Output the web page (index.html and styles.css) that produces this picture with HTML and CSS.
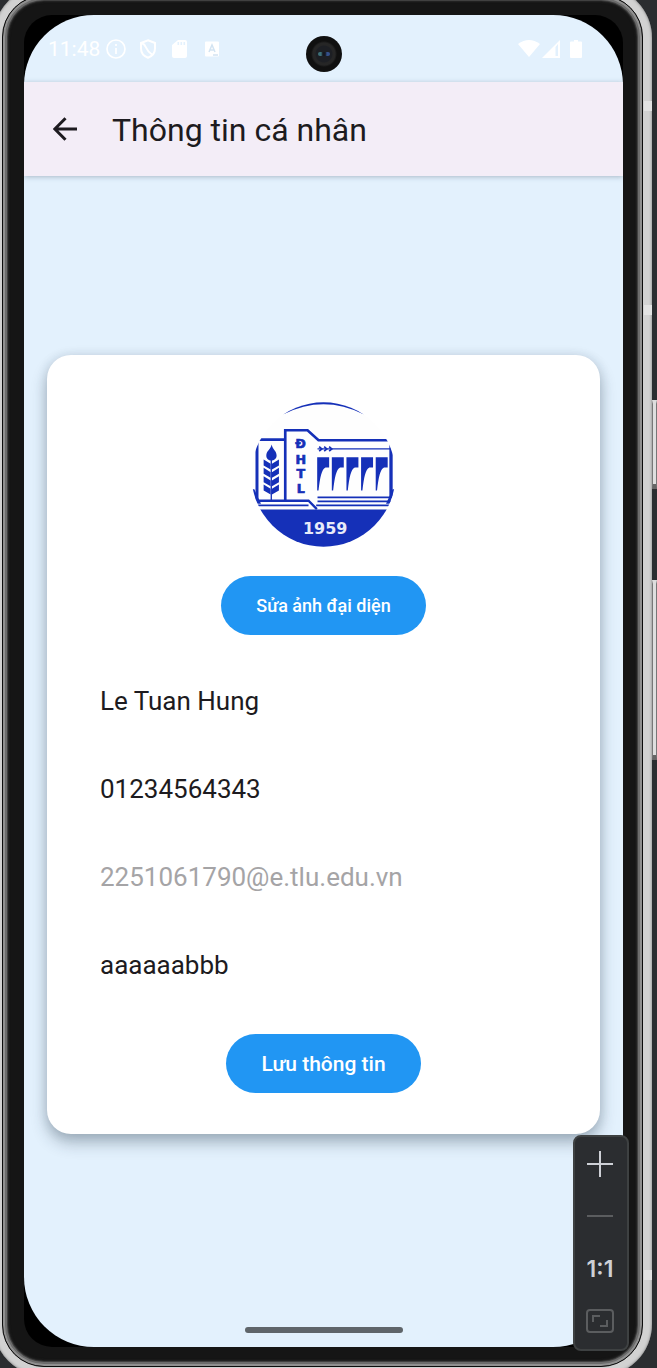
FILE: index.html
```html
<!DOCTYPE html>
<html lang="vi">
<head>
<meta charset="utf-8">
<meta name="viewport" content="width=device-width, initial-scale=1">
<title>Thông tin cá nhân</title>
<link rel="stylesheet" href="styles.css">
</head>
<body>
<div class="phone">
  <div class="frame">
    <div class="glass">
      <div class="screen">
        <div class="status-bar">
          <div class="status-group">
            <span class="clock">11:48</span>
            <svg class="status-icon" viewBox="0 0 20 20" fill="none" stroke="#fff" stroke-width="1.7"><circle cx="10" cy="10" r="9"/><path d="M10 9v6M10 5v2"/></svg>
            <svg class="status-icon" viewBox="0 0 20 20" fill="none" stroke="#fff" stroke-width="2"><path d="M10 1.300 17 4v5.500c0 4.300-3 7.700-7 9.200-4-1.500-7-4.900-7-9.200V4zM4 4c2 1 3 2 4 4.500S12 14 14 15.500"/></svg>
            <svg class="status-icon" viewBox="0 0 20 20" fill="#fff"><path fill-rule="evenodd" d="M8 1h7a2 2 0 0 1 2 2v14a2 2 0 0 1-2 2H4a2 2 0 0 1-2-2V6zM7.500 3v3h1.600V3zm3 0v3h1.600V3zm3 0v3h1.600V3z"/></svg>
            <svg class="status-icon" viewBox="0 0 20 20"><rect x="3" y="2.500" width="14" height="15" rx="1" fill="#fff"/><path d="M7 13 10 6l3 7M8 11h4M11 16h5" fill="none" stroke="#d3e4f2" stroke-width="1.500"/></svg>
          </div>
          <div class="camera"><i class="lens"></i></div>
          <div class="status-group status-right">
            <svg class="wifi" viewBox="0 0 22 20" fill="#fff"><path d="M0 5Q11-3 22 5L11 18z"/></svg>
            <svg class="signal" viewBox="0 0 20 20" fill="#fff"><path fill-rule="evenodd" d="M19 1v18H1zM14.500 8v9h2.500V5z"/></svg>
            <svg class="battery" viewBox="0 0 12 20" fill="#fff"><path d="M4 1h4v1.500h3q1 0 1 1V18q0 1-1 1H1q-1 0-1-1V3.500q0-1 1-1h3z"/></svg>
          </div>
        </div>
        <header class="app-bar">
          <button class="back" type="button" aria-label="Quay lại">
            <svg viewBox="0 0 24 24" fill="none" stroke="#1d1b20" stroke-width="3"><path d="M24 12H2M12.500 1.200 1.800 12l10.700 10.800"/></svg>
          </button>
          <h1 class="title">Thông tin cá nhân</h1>
        </header>
        <main class="content">
          <form class="card">
            <svg class="avatar" viewBox="32 34 436 436" role="img" aria-label="Logo ĐHTL 1959">
              <defs><clipPath id="disc"><circle cx="250" cy="252" r="217"/></clipPath></defs>
              <g clip-path="url(#disc)">
                <rect x="30" y="30" width="440" height="440" fill="#fefefe"/>
                <path d="M130 71Q250 11 370 71V20H130z" fill="#1530b8"/>
                <path d="M30 357H470V475H30z" fill="#1530b8"/>
                <path d="M30 296H42L62 340H30zM470 296H458L438 340H470z" fill="#1530b8"/>
                <g fill="none" stroke="#1530b8">
                  <path d="M50 147H135" stroke-width="8"/>
                  <path d="M50 150V330" stroke-width="9"/>
                  <path d="M135 330V119H202L235 149H450" stroke-width="8"/>
                  <path d="M50 331H205L230 356" stroke-width="7"/>
                  <path d="M50 345H205M228 345H455M232 333H455M232 321H455" stroke-width="5"/>
                  <path d="M453 145V322" stroke-width="10"/>
                  <path d="M232 175H452" stroke-width="4"/>
                  <path d="M237 168l8 7-8 7M252 168l8 7-8 7M267 168l8 7-8 7" stroke-width="5"/>
                  <path d="M93 205V332" stroke-width="4"/>
                </g>
                <g fill="#1530b8">
                  <path d="M94 162C91 178 78 181 78 195C78 205 85 210 93 210C101 210 109 205 109 195C109 181 97 178 94 162z"/>
                  <path d="M70 207 91 220V237L70 225zM116 207 95 220V237L116 225zM70 232 91 245V262L70 250zM116 232 95 245V262L116 250zM70 257 91 270V287L70 275zM116 257 95 270V287L116 275zM70 282 91 295V312L70 300zM116 282 95 295V312L116 300z"/>
                  <path id="gate" d="M231 200H267V231H256C244 237 240 260 235 300H231z"/>
                  <use href="#gate" x="44"/><use href="#gate" x="88"/><use href="#gate" x="132"/><use href="#gate" x="176"/>
                </g>
                <g class="logo-letters">
                  <text x="181" y="171">Đ</text><text x="182" y="219">H</text><text x="182" y="264">T</text><text x="182" y="309">L</text>
                </g>
                <text class="logo-year" x="255" y="430">1959</text>
              </g>
            </svg>
            <button class="action action-small" type="button">Sửa ảnh đại diện</button>
            <div class="fields">
              <input class="field" type="text" aria-label="Họ tên" value="Le Tuan Hung">
              <input class="field" type="tel" aria-label="Số điện thoại" value="01234564343">
              <input class="field" type="email" aria-label="Email" value="2251061790@e.tlu.edu.vn" disabled>
              <input class="field" type="text" aria-label="Địa chỉ" value="aaaaaabbb">
            </div>
            <button class="action" type="submit">Lưu thông tin</button>
          </form>
        </main>
        <div class="nav-bar"><i class="handle"></i></div>
      </div>
    </div>
  </div>
  <i class="antenna antenna-top"></i>
  <i class="antenna antenna-middle"></i>
  <i class="antenna antenna-bottom"></i>
  <i class="side-key power"></i>
  <i class="side-key volume"></i>
</div>
<div class="zoom-bar">
  <button type="button" aria-label="Zoom in"><svg viewBox="0 0 28 28" stroke="#ced0d6" stroke-width="2"><path d="M1 14H27M14 1V27"/></svg></button>
  <button type="button" aria-label="Zoom out" disabled><svg viewBox="0 0 28 28" stroke="#5b5d5f" stroke-width="2"><path d="M1 14H27"/></svg></button>
  <button type="button">1:1</button>
  <button type="button" aria-label="Fit to screen" disabled><svg viewBox="0 0 28 28" fill="none" stroke="#5b5d5f" stroke-width="2"><rect x="1" y="3" width="26" height="22" rx="3"/><path d="M7 15V9h7M21 13v6h-7"/></svg></button>
</div>
</body>
</html>
```

FILE: styles.css
```css
* { box-sizing: border-box; }

body {
  margin: 0;
  height: 100vh;
  overflow: hidden;
  position: relative;
  background: #2b2d30;
  font-family: Roboto, "Noto Sans", sans-serif;
  color: #1d1b20;
}

button { border: 0; padding: 0; font: inherit; cursor: pointer; }

/* Device shell: metal rim, bezel, glass */
.phone {
  position: relative;
  display: flex;
  height: calc(100vh + 22px);
  margin: -14px 5px 0 -7px;
  padding: 9px;
  border-radius: 52px;
  background: #d2d2d2;
  box-shadow: inset 0 0 3px #777;
}

.frame {
  flex: 1;
  display: flex;
  padding: 19px 19px 19px 21px;
  border: 1px solid #0c0c0c;
  border-radius: 42px;
  background: #151515;
  box-shadow: inset 0 0 0 2px #909090, inset 0 0 0 4px #6c6c6c, inset 0 0 1px 5px #444, inset 0 0 2px 6px #222;
}

.glass {
  flex: 1;
  display: flex;
  border-radius: 28px;
  background: #000;
}

.screen {
  flex: 1;
  min-width: 0;
  display: flex;
  flex-direction: column;
  overflow: hidden;
  border-radius: 70px;
  background: #e3f1fd;
}

.antenna {
  position: absolute;
  right: 0;
  width: 8px;
  height: 10px;
  background: #e2e2e2;
}
.antenna-top { top: 115px; }
.antenna-middle { top: 319px; }
.antenna-bottom { bottom: 96px; }

.side-key {
  position: absolute;
  left: 100%;
  width: 5px;
  border: 1px solid #777;
  border-top: 4px double #ddd;
  border-bottom: 5px solid #666;
  background: #dedede;
}
.power { top: 414px; height: 89px; }
.volume { top: 594px; height: 180px; }

/* Status bar */
.status-bar {
  flex: none;
  height: 67px;
  display: grid;
  grid-template-columns: 1fr auto 1fr;
  align-items: center;
  padding: 0 41px 0 24px;
  color: #fff;
}
.status-group { display: flex; align-items: center; gap: 12px; }
.status-right { justify-content: flex-end; gap: 1px; }
.clock { font-size: 21px; line-height: 24px; margin-right: -6px; }
.status-icon { width: 20px; height: 20px; }
.wifi { width: 22px; height: 20px; }
.signal { width: 20px; height: 20px; }
.battery { width: 12px; height: 20px; margin-left: 8px; }

.camera {
  display: grid;
  place-items: center;
  width: 36px;
  height: 36px;
  margin: 11px 0 0 17px;
  border-radius: 50%;
  background: radial-gradient(circle, #1d1f24 0 8px, #262626 9px 11px, #101010 13px);
}
.lens {
  width: 12px;
  height: 4px;
  border-radius: 2px;
  background: linear-gradient(90deg, #3d7078 25%, #15181f 40% 60%, #34508a 75%);
}

/* App bar */
.app-bar {
  flex: none;
  height: 94px;
  display: flex;
  align-items: center;
  gap: 34px;
  padding: 0 28px;
  background: #f3edf7;
  box-shadow: 0 1px 5px rgba(60, 80, 100, .35);
}
.back { width: 26px; height: 26px; background: none; }
.back svg { display: block; width: 24px; height: 24px; margin: 0 auto; }
.title { margin: 2px 0 0; font-size: 32px; line-height: 40px; font-weight: 400; }

/* Profile card */
.content {
  flex: 1;
  display: flex;
  flex-direction: column;
  justify-content: center;
  padding: 0 23px;
}
.card {
  display: flex;
  flex-direction: column;
  align-items: center;
  padding: 47px 40px 41px;
  border-radius: 24px;
  background: #fff;
  box-shadow: 0 9px 16px rgba(30, 50, 65, .3), 0 1px 12px rgba(30, 50, 65, .14);
}
.avatar { width: 145px; height: 145px; margin-bottom: 29px; }
.logo-letters { font: 700 38px "DejaVu Sans", sans-serif; fill: #1530b8; stroke: #1530b8; stroke-width: 2; text-anchor: middle; }
.logo-year { font: 700 48px "DejaVu Sans", sans-serif; fill: #e8ebf9; text-anchor: middle; }

.action {
  height: 59px;
  padding: 0 35px;
  border-radius: 30px;
  background: #2196f3;
  color: #fff;
  font-size: 21px;
  font-weight: 500;
}
.action-small { font-size: 18px; }

.fields {
  align-self: stretch;
  display: flex;
  flex-direction: column;
  margin: 22px 0 25px;
}
.field {
  width: 100%;
  height: 88px;
  padding: 0 13px;
  border: 0;
  background: none;
  font: inherit;
  font-size: 26px;
  color: #1d1b20;
}
.field:disabled { color: #a5a4a6; }

.nav-bar { flex: none; height: 34px; display: grid; place-items: center; }
.handle { width: 158px; height: 6px; border-radius: 3px; background: #5f656a; }

/* Emulator zoom controls */
.zoom-bar {
  position: absolute;
  right: 28px;
  bottom: 17px;
  width: 56px;
  height: 216px;
  display: flex;
  flex-direction: column;
  justify-content: space-between;
  align-items: center;
  padding: 13px 2px 14px 0;
  border: 2px solid #3e4142;
  border-radius: 8px;
  background: #2b2d30;
}
.zoom-bar button {
  height: 28px;
  background: none;
  color: #ced0d6;
  font: 600 23px/28px Inter, "Liberation Sans", sans-serif;
}
.zoom-bar svg { display: block; width: 28px; height: 28px; fill: none; }
```
